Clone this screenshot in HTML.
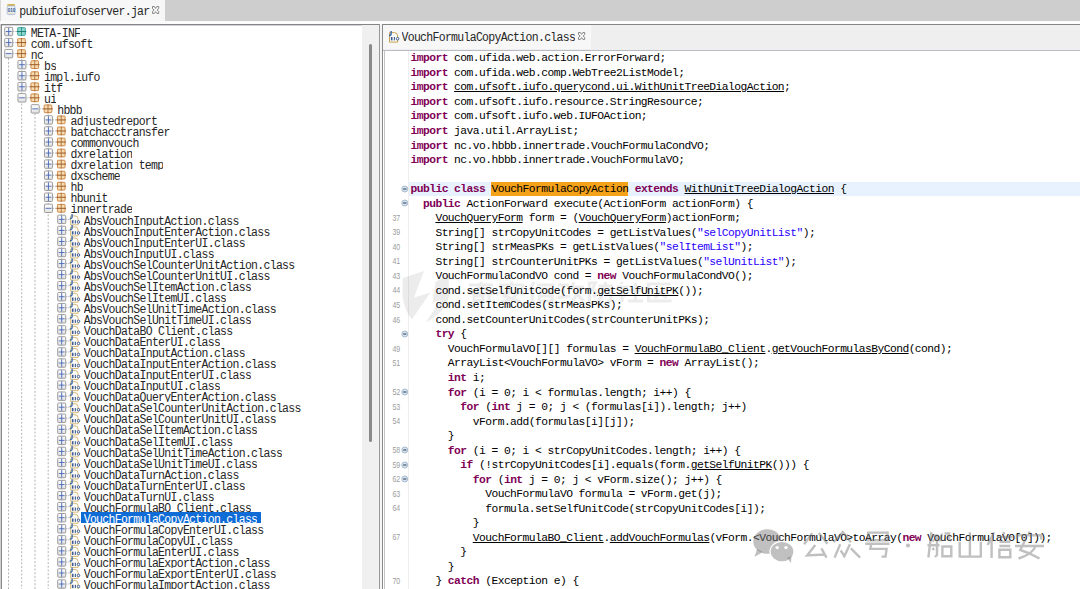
<!DOCTYPE html><html><head><meta charset="utf-8"><style>
*{margin:0;padding:0;box-sizing:border-box}
html,body{width:1080px;height:589px;overflow:hidden;background:#cecece;position:relative}
.a{position:absolute}
.tt{position:absolute;font-family:"Liberation Mono",monospace;font-size:11.5px;letter-spacing:-0.7px;color:#262626;white-space:pre;line-height:14.2px;height:11.05px;overflow:hidden}
.ts{display:block;transform:scaleY(1.05);transform-origin:0 10.15px}
.cl{position:absolute;left:410.5px;font-family:"Liberation Mono",monospace;font-size:11.3px;letter-spacing:-0.553px;color:#000;white-space:pre;line-height:14.53px;height:14.53px}
.k{color:#7f0055;font-weight:bold}
.s{color:#2a00ff}
.u{text-decoration:underline;text-underline-offset:1px}
.ln{position:absolute;left:380px;width:20.2px;text-align:right;font-family:"Liberation Sans",sans-serif;font-size:9px;color:#9c9c9c;line-height:14.53px;height:14.53px;transform:scaleX(0.78);transform-origin:100% 50%}
</style></head><body><div class="a" style="left:0;top:0;width:165px;height:22px;background:#f7f7f7"></div>
<div class="a" style="left:0;top:0;width:1px;height:23px;background:#d8d8d8"></div>
<div class="a" style="left:0;top:21px;width:1080px;height:3px;background:#fcfcfc"></div>
<div class="a" style="left:1px;top:24px;width:379px;height:565px;background:#fff;border-top:1px solid #858585;border-left:1px solid #8a8a8a;border-right:1px solid #9a9a9a"></div>
<div class="a" style="left:2px;top:25px;width:377px;height:1px;background:#d0d3d8"></div>
<div class="a" style="left:380px;top:24px;width:2px;height:565px;background:#f4f4f4"></div>
<div class="a" style="left:362px;top:25px;width:17px;height:564px;background:#f0f0f0"></div>
<div class="a" style="left:368.5px;top:44px;width:3.5px;height:398px;background:#8a8a8a;border-radius:2px"></div>
<div class="a" style="left:382px;top:24px;width:698px;height:565px;background:#fff;border-top:1px solid #858585;border-left:1px solid #8a8a8a"></div>
<div class="a" style="left:383px;top:25px;width:697px;height:25px;background:#efefef"></div>
<div class="a" style="left:383px;top:25px;width:208px;height:23.5px;background:#f7f7f7"></div>
<div class="a" style="left:383px;top:50px;width:697px;height:1px;background:#b9bcc2"></div>
<div class="a" style="left:384px;top:51px;width:1px;height:538px;background:#c4c4c4"></div>
<div class="a" style="left:408px;top:51px;width:1px;height:538px;background:#eeeeee"></div>
<div class="tt" style="left:19.3px;top:5.1px;height:15px;"><span class="ts">pubiufoiufoserver.jar</span></div>
<div class="tt" style="left:401.5px;top:30.9px;height:15px;"><span class="ts">VouchFormulaCopyAction.class</span></div>
<svg class="a" style="left:151.5px;top:5.6px" width="9" height="9"><path d="M0.5 0.5 H2.4 L3.6 2.4 L4.8 0.5 H6.7 V2.6 L5.1 4 L6.7 5.4 V7.4 H4.8 L3.6 5.6 L2.4 7.4 H0.5 V5.4 L2.1 4 L0.5 2.6 Z" fill="none" stroke="#858585" stroke-width="1"/></svg>
<svg class="a" style="left:577.6px;top:31.8px" width="9" height="9"><path d="M0.5 0.5 H2.4 L3.6 2.4 L4.8 0.5 H6.7 V2.6 L5.1 4 L6.7 5.4 V7.4 H4.8 L3.6 5.6 L2.4 7.4 H0.5 V5.4 L2.1 4 L0.5 2.6 Z" fill="none" stroke="#858585" stroke-width="1"/></svg>
<svg class="a" style="left:6px;top:3px" width="11" height="13"><rect x="1.3" y="1.1" width="7.6" height="2" rx="0.6" fill="#d6b24e"/><rect x="1.2" y="3" width="7.8" height="8.6" rx="1.2" fill="#eef3fa" stroke="#a9bddb" stroke-width="0.9"/><text x="1.7" y="9" font-family="Liberation Sans" font-size="4.6" font-weight="bold" fill="#33558a">010</text><rect x="2" y="9.8" width="6" height="1" fill="#e6ddb0"/></svg>
<svg class="a" style="left:0;top:0" width="420" height="60"><path d="M389.5 32.6 h4.8 q3.3 0 3.3 3.3 v6.2 h-8.1 z" fill="#fbfbf8" stroke="#c9a24e" stroke-width="1"/><path d="M391.1 31.000000000000004 v3 q0 1.6 -2.1 1.6" fill="none" stroke="#3f6fb0" stroke-width="1.5"/><rect x="390.90000000000003" y="37.0" width="1.6" height="3.4" fill="#3d5a92"/><rect x="393.8" y="37.0" width="1.1" height="3.4" fill="#3d5a92"/><circle cx="397.6" cy="38.7" r="1.3" fill="#fff" stroke="#3d5a92" stroke-width="1"/></svg>
<div class="a" style="left:2px;top:25px;width:360px;height:564px;overflow:hidden"><div class="a" style="left:-2px;top:-25px"><svg class="a" style="left:0;top:0" width="362" height="589"><defs><linearGradient id="bg" x1="0" y1="0" x2="0" y2="1"><stop offset="0" stop-color="#ffffff"/><stop offset="1" stop-color="#e2e2e2"/></linearGradient></defs><line x1="8.5" y1="58.1" x2="8.5" y2="589" stroke="#b4b4b4" stroke-width="1" stroke-dasharray="2,1.7"/><line x1="21.7" y1="59.150000000000006" x2="21.7" y2="589" stroke="#b4b4b4" stroke-width="1" stroke-dasharray="2,1.7"/><line x1="35.0" y1="113.35000000000001" x2="35.0" y2="589" stroke="#b4b4b4" stroke-width="1" stroke-dasharray="2,1.7"/><line x1="48.2" y1="114.4" x2="48.2" y2="589" stroke="#b4b4b4" stroke-width="1" stroke-dasharray="2,1.7"/><line x1="61.4" y1="213.85000000000002" x2="61.4" y2="589" stroke="#b4b4b4" stroke-width="1" stroke-dasharray="2,1.7"/><line x1="13.2" y1="31.525" x2="18.2" y2="31.525" stroke="#a0a0a0" stroke-width="1" stroke-dasharray="1,1.2"/><rect x="4.7" y="27.325" width="8" height="8.4" fill="url(#bg)" stroke="#9c9c9c" stroke-width="1" rx="0.8"/><line x1="5.800000000000001" y1="31.525" x2="11.600000000000001" y2="31.525" stroke="#4565b5" stroke-width="0.9"/><line x1="8.7" y1="27.825" x2="8.7" y2="35.225" stroke="#4565b5" stroke-width="0.9"/><rect x="17.7" y="27.625" width="7.6" height="7.7" rx="0.6" fill="#8fd8cf" stroke="#3fa7a0" stroke-width="1"/><line x1="21.5" y1="26.924999999999997" x2="21.5" y2="36.025" stroke="#1f7d78" stroke-width="0.9" stroke-opacity="0.8"/><line x1="16.6" y1="31.525" x2="26.3" y2="31.525" stroke="#1f7d78" stroke-width="1"/><line x1="13.2" y1="42.574999999999996" x2="18.2" y2="42.574999999999996" stroke="#a0a0a0" stroke-width="1" stroke-dasharray="1,1.2"/><rect x="4.7" y="38.37499999999999" width="8" height="8.4" fill="url(#bg)" stroke="#9c9c9c" stroke-width="1" rx="0.8"/><line x1="5.800000000000001" y1="42.574999999999996" x2="11.600000000000001" y2="42.574999999999996" stroke="#4565b5" stroke-width="0.9"/><line x1="8.7" y1="38.87499999999999" x2="8.7" y2="46.275" stroke="#4565b5" stroke-width="0.9"/><rect x="17.7" y="38.675" width="7.6" height="7.7" rx="0.6" fill="#f6dcae" stroke="#cf8a4b" stroke-width="1"/><line x1="21.5" y1="37.974999999999994" x2="21.5" y2="47.074999999999996" stroke="#9a5a2a" stroke-width="0.9" stroke-opacity="0.8"/><line x1="16.6" y1="42.574999999999996" x2="26.3" y2="42.574999999999996" stroke="#9a5a2a" stroke-width="1"/><line x1="13.2" y1="53.625" x2="18.2" y2="53.625" stroke="#a0a0a0" stroke-width="1" stroke-dasharray="1,1.2"/><rect x="4.7" y="49.425" width="8" height="8.4" fill="url(#bg)" stroke="#9c9c9c" stroke-width="1" rx="0.8"/><line x1="5.800000000000001" y1="53.625" x2="11.600000000000001" y2="53.625" stroke="#4565b5" stroke-width="0.9"/><rect x="17.7" y="49.725" width="7.6" height="7.7" rx="0.6" fill="#f6dcae" stroke="#cf8a4b" stroke-width="1"/><line x1="21.5" y1="49.025" x2="21.5" y2="58.125" stroke="#9a5a2a" stroke-width="0.9" stroke-opacity="0.8"/><line x1="16.6" y1="53.625" x2="26.3" y2="53.625" stroke="#9a5a2a" stroke-width="1"/><line x1="26.45" y1="64.67500000000001" x2="31.45" y2="64.67500000000001" stroke="#a0a0a0" stroke-width="1" stroke-dasharray="1,1.2"/><rect x="17.95" y="60.47500000000001" width="8" height="8.4" fill="url(#bg)" stroke="#9c9c9c" stroke-width="1" rx="0.8"/><line x1="19.05" y1="64.67500000000001" x2="24.85" y2="64.67500000000001" stroke="#4565b5" stroke-width="0.9"/><line x1="21.95" y1="60.97500000000001" x2="21.95" y2="68.37500000000001" stroke="#4565b5" stroke-width="0.9"/><rect x="30.949999999999996" y="60.77500000000001" width="7.6" height="7.7" rx="0.6" fill="#f6dcae" stroke="#cf8a4b" stroke-width="1"/><line x1="34.75" y1="60.07500000000001" x2="34.75" y2="69.17500000000001" stroke="#9a5a2a" stroke-width="0.9" stroke-opacity="0.8"/><line x1="29.849999999999998" y1="64.67500000000001" x2="39.55" y2="64.67500000000001" stroke="#9a5a2a" stroke-width="1"/><line x1="26.45" y1="75.72500000000001" x2="31.45" y2="75.72500000000001" stroke="#a0a0a0" stroke-width="1" stroke-dasharray="1,1.2"/><rect x="17.95" y="71.525" width="8" height="8.4" fill="url(#bg)" stroke="#9c9c9c" stroke-width="1" rx="0.8"/><line x1="19.05" y1="75.72500000000001" x2="24.85" y2="75.72500000000001" stroke="#4565b5" stroke-width="0.9"/><line x1="21.95" y1="72.025" x2="21.95" y2="79.42500000000001" stroke="#4565b5" stroke-width="0.9"/><rect x="30.949999999999996" y="71.825" width="7.6" height="7.7" rx="0.6" fill="#f6dcae" stroke="#cf8a4b" stroke-width="1"/><line x1="34.75" y1="71.12500000000001" x2="34.75" y2="80.22500000000001" stroke="#9a5a2a" stroke-width="0.9" stroke-opacity="0.8"/><line x1="29.849999999999998" y1="75.72500000000001" x2="39.55" y2="75.72500000000001" stroke="#9a5a2a" stroke-width="1"/><line x1="26.45" y1="86.775" x2="31.45" y2="86.775" stroke="#a0a0a0" stroke-width="1" stroke-dasharray="1,1.2"/><rect x="17.95" y="82.575" width="8" height="8.4" fill="url(#bg)" stroke="#9c9c9c" stroke-width="1" rx="0.8"/><line x1="19.05" y1="86.775" x2="24.85" y2="86.775" stroke="#4565b5" stroke-width="0.9"/><line x1="21.95" y1="83.075" x2="21.95" y2="90.47500000000001" stroke="#4565b5" stroke-width="0.9"/><rect x="30.949999999999996" y="82.875" width="7.6" height="7.7" rx="0.6" fill="#f6dcae" stroke="#cf8a4b" stroke-width="1"/><line x1="34.75" y1="82.17500000000001" x2="34.75" y2="91.275" stroke="#9a5a2a" stroke-width="0.9" stroke-opacity="0.8"/><line x1="29.849999999999998" y1="86.775" x2="39.55" y2="86.775" stroke="#9a5a2a" stroke-width="1"/><line x1="26.45" y1="97.82500000000002" x2="31.45" y2="97.82500000000002" stroke="#a0a0a0" stroke-width="1" stroke-dasharray="1,1.2"/><rect x="17.95" y="93.62500000000001" width="8" height="8.4" fill="url(#bg)" stroke="#9c9c9c" stroke-width="1" rx="0.8"/><line x1="19.05" y1="97.82500000000002" x2="24.85" y2="97.82500000000002" stroke="#4565b5" stroke-width="0.9"/><rect x="30.949999999999996" y="93.92500000000001" width="7.6" height="7.7" rx="0.6" fill="#f6dcae" stroke="#cf8a4b" stroke-width="1"/><line x1="34.75" y1="93.22500000000002" x2="34.75" y2="102.32500000000002" stroke="#9a5a2a" stroke-width="0.9" stroke-opacity="0.8"/><line x1="29.849999999999998" y1="97.82500000000002" x2="39.55" y2="97.82500000000002" stroke="#9a5a2a" stroke-width="1"/><line x1="39.7" y1="108.87500000000001" x2="44.7" y2="108.87500000000001" stroke="#a0a0a0" stroke-width="1" stroke-dasharray="1,1.2"/><rect x="31.2" y="104.67500000000001" width="8" height="8.4" fill="url(#bg)" stroke="#9c9c9c" stroke-width="1" rx="0.8"/><line x1="32.3" y1="108.87500000000001" x2="38.1" y2="108.87500000000001" stroke="#4565b5" stroke-width="0.9"/><rect x="44.199999999999996" y="104.97500000000001" width="7.6" height="7.7" rx="0.6" fill="#f6dcae" stroke="#cf8a4b" stroke-width="1"/><line x1="48.0" y1="104.27500000000002" x2="48.0" y2="113.37500000000001" stroke="#9a5a2a" stroke-width="0.9" stroke-opacity="0.8"/><line x1="43.099999999999994" y1="108.87500000000001" x2="52.8" y2="108.87500000000001" stroke="#9a5a2a" stroke-width="1"/><line x1="52.95" y1="119.92500000000001" x2="57.95" y2="119.92500000000001" stroke="#a0a0a0" stroke-width="1" stroke-dasharray="1,1.2"/><rect x="44.45" y="115.72500000000001" width="8" height="8.4" fill="url(#bg)" stroke="#9c9c9c" stroke-width="1" rx="0.8"/><line x1="45.550000000000004" y1="119.92500000000001" x2="51.35" y2="119.92500000000001" stroke="#4565b5" stroke-width="0.9"/><line x1="48.45" y1="116.22500000000001" x2="48.45" y2="123.62500000000001" stroke="#4565b5" stroke-width="0.9"/><rect x="57.45" y="116.025" width="7.6" height="7.7" rx="0.6" fill="#f6dcae" stroke="#cf8a4b" stroke-width="1"/><line x1="61.25000000000001" y1="115.32500000000002" x2="61.25000000000001" y2="124.42500000000001" stroke="#9a5a2a" stroke-width="0.9" stroke-opacity="0.8"/><line x1="56.35" y1="119.92500000000001" x2="66.05000000000001" y2="119.92500000000001" stroke="#9a5a2a" stroke-width="1"/><line x1="52.95" y1="130.975" x2="57.95" y2="130.975" stroke="#a0a0a0" stroke-width="1" stroke-dasharray="1,1.2"/><rect x="44.45" y="126.77499999999999" width="8" height="8.4" fill="url(#bg)" stroke="#9c9c9c" stroke-width="1" rx="0.8"/><line x1="45.550000000000004" y1="130.975" x2="51.35" y2="130.975" stroke="#4565b5" stroke-width="0.9"/><line x1="48.45" y1="127.27499999999999" x2="48.45" y2="134.67499999999998" stroke="#4565b5" stroke-width="0.9"/><rect x="57.45" y="127.07499999999999" width="7.6" height="7.7" rx="0.6" fill="#f6dcae" stroke="#cf8a4b" stroke-width="1"/><line x1="61.25000000000001" y1="126.375" x2="61.25000000000001" y2="135.475" stroke="#9a5a2a" stroke-width="0.9" stroke-opacity="0.8"/><line x1="56.35" y1="130.975" x2="66.05000000000001" y2="130.975" stroke="#9a5a2a" stroke-width="1"/><line x1="52.95" y1="142.025" x2="57.95" y2="142.025" stroke="#a0a0a0" stroke-width="1" stroke-dasharray="1,1.2"/><rect x="44.45" y="137.82500000000002" width="8" height="8.4" fill="url(#bg)" stroke="#9c9c9c" stroke-width="1" rx="0.8"/><line x1="45.550000000000004" y1="142.025" x2="51.35" y2="142.025" stroke="#4565b5" stroke-width="0.9"/><line x1="48.45" y1="138.32500000000002" x2="48.45" y2="145.725" stroke="#4565b5" stroke-width="0.9"/><rect x="57.45" y="138.125" width="7.6" height="7.7" rx="0.6" fill="#f6dcae" stroke="#cf8a4b" stroke-width="1"/><line x1="61.25000000000001" y1="137.425" x2="61.25000000000001" y2="146.525" stroke="#9a5a2a" stroke-width="0.9" stroke-opacity="0.8"/><line x1="56.35" y1="142.025" x2="66.05000000000001" y2="142.025" stroke="#9a5a2a" stroke-width="1"/><line x1="52.95" y1="153.07500000000002" x2="57.95" y2="153.07500000000002" stroke="#a0a0a0" stroke-width="1" stroke-dasharray="1,1.2"/><rect x="44.45" y="148.87500000000003" width="8" height="8.4" fill="url(#bg)" stroke="#9c9c9c" stroke-width="1" rx="0.8"/><line x1="45.550000000000004" y1="153.07500000000002" x2="51.35" y2="153.07500000000002" stroke="#4565b5" stroke-width="0.9"/><line x1="48.45" y1="149.37500000000003" x2="48.45" y2="156.775" stroke="#4565b5" stroke-width="0.9"/><rect x="57.45" y="149.175" width="7.6" height="7.7" rx="0.6" fill="#f6dcae" stroke="#cf8a4b" stroke-width="1"/><line x1="61.25000000000001" y1="148.47500000000002" x2="61.25000000000001" y2="157.57500000000002" stroke="#9a5a2a" stroke-width="0.9" stroke-opacity="0.8"/><line x1="56.35" y1="153.07500000000002" x2="66.05000000000001" y2="153.07500000000002" stroke="#9a5a2a" stroke-width="1"/><line x1="52.95" y1="164.12500000000003" x2="57.95" y2="164.12500000000003" stroke="#a0a0a0" stroke-width="1" stroke-dasharray="1,1.2"/><rect x="44.45" y="159.92500000000004" width="8" height="8.4" fill="url(#bg)" stroke="#9c9c9c" stroke-width="1" rx="0.8"/><line x1="45.550000000000004" y1="164.12500000000003" x2="51.35" y2="164.12500000000003" stroke="#4565b5" stroke-width="0.9"/><line x1="48.45" y1="160.42500000000004" x2="48.45" y2="167.82500000000002" stroke="#4565b5" stroke-width="0.9"/><rect x="57.45" y="160.22500000000002" width="7.6" height="7.7" rx="0.6" fill="#f6dcae" stroke="#cf8a4b" stroke-width="1"/><line x1="61.25000000000001" y1="159.52500000000003" x2="61.25000000000001" y2="168.62500000000003" stroke="#9a5a2a" stroke-width="0.9" stroke-opacity="0.8"/><line x1="56.35" y1="164.12500000000003" x2="66.05000000000001" y2="164.12500000000003" stroke="#9a5a2a" stroke-width="1"/><line x1="52.95" y1="175.175" x2="57.95" y2="175.175" stroke="#a0a0a0" stroke-width="1" stroke-dasharray="1,1.2"/><rect x="44.45" y="170.97500000000002" width="8" height="8.4" fill="url(#bg)" stroke="#9c9c9c" stroke-width="1" rx="0.8"/><line x1="45.550000000000004" y1="175.175" x2="51.35" y2="175.175" stroke="#4565b5" stroke-width="0.9"/><line x1="48.45" y1="171.47500000000002" x2="48.45" y2="178.875" stroke="#4565b5" stroke-width="0.9"/><rect x="57.45" y="171.275" width="7.6" height="7.7" rx="0.6" fill="#f6dcae" stroke="#cf8a4b" stroke-width="1"/><line x1="61.25000000000001" y1="170.57500000000002" x2="61.25000000000001" y2="179.675" stroke="#9a5a2a" stroke-width="0.9" stroke-opacity="0.8"/><line x1="56.35" y1="175.175" x2="66.05000000000001" y2="175.175" stroke="#9a5a2a" stroke-width="1"/><line x1="52.95" y1="186.22500000000002" x2="57.95" y2="186.22500000000002" stroke="#a0a0a0" stroke-width="1" stroke-dasharray="1,1.2"/><rect x="44.45" y="182.02500000000003" width="8" height="8.4" fill="url(#bg)" stroke="#9c9c9c" stroke-width="1" rx="0.8"/><line x1="45.550000000000004" y1="186.22500000000002" x2="51.35" y2="186.22500000000002" stroke="#4565b5" stroke-width="0.9"/><line x1="48.45" y1="182.52500000000003" x2="48.45" y2="189.925" stroke="#4565b5" stroke-width="0.9"/><rect x="57.45" y="182.32500000000002" width="7.6" height="7.7" rx="0.6" fill="#f6dcae" stroke="#cf8a4b" stroke-width="1"/><line x1="61.25000000000001" y1="181.62500000000003" x2="61.25000000000001" y2="190.72500000000002" stroke="#9a5a2a" stroke-width="0.9" stroke-opacity="0.8"/><line x1="56.35" y1="186.22500000000002" x2="66.05000000000001" y2="186.22500000000002" stroke="#9a5a2a" stroke-width="1"/><line x1="52.95" y1="197.275" x2="57.95" y2="197.275" stroke="#a0a0a0" stroke-width="1" stroke-dasharray="1,1.2"/><rect x="44.45" y="193.07500000000002" width="8" height="8.4" fill="url(#bg)" stroke="#9c9c9c" stroke-width="1" rx="0.8"/><line x1="45.550000000000004" y1="197.275" x2="51.35" y2="197.275" stroke="#4565b5" stroke-width="0.9"/><line x1="48.45" y1="193.57500000000002" x2="48.45" y2="200.975" stroke="#4565b5" stroke-width="0.9"/><rect x="57.45" y="193.375" width="7.6" height="7.7" rx="0.6" fill="#f6dcae" stroke="#cf8a4b" stroke-width="1"/><line x1="61.25000000000001" y1="192.675" x2="61.25000000000001" y2="201.775" stroke="#9a5a2a" stroke-width="0.9" stroke-opacity="0.8"/><line x1="56.35" y1="197.275" x2="66.05000000000001" y2="197.275" stroke="#9a5a2a" stroke-width="1"/><line x1="52.95" y1="208.32500000000002" x2="57.95" y2="208.32500000000002" stroke="#a0a0a0" stroke-width="1" stroke-dasharray="1,1.2"/><rect x="44.45" y="204.12500000000003" width="8" height="8.4" fill="url(#bg)" stroke="#9c9c9c" stroke-width="1" rx="0.8"/><line x1="45.550000000000004" y1="208.32500000000002" x2="51.35" y2="208.32500000000002" stroke="#4565b5" stroke-width="0.9"/><rect x="57.45" y="204.425" width="7.6" height="7.7" rx="0.6" fill="#f6dcae" stroke="#cf8a4b" stroke-width="1"/><line x1="61.25000000000001" y1="203.72500000000002" x2="61.25000000000001" y2="212.82500000000002" stroke="#9a5a2a" stroke-width="0.9" stroke-opacity="0.8"/><line x1="56.35" y1="208.32500000000002" x2="66.05000000000001" y2="208.32500000000002" stroke="#9a5a2a" stroke-width="1"/><line x1="66.2" y1="219.37500000000003" x2="71.2" y2="219.37500000000003" stroke="#a0a0a0" stroke-width="1" stroke-dasharray="1,1.2"/><rect x="57.7" y="215.17500000000004" width="8" height="8.4" fill="url(#bg)" stroke="#9c9c9c" stroke-width="1" rx="0.8"/><line x1="58.800000000000004" y1="219.37500000000003" x2="64.60000000000001" y2="219.37500000000003" stroke="#4565b5" stroke-width="0.9"/><line x1="61.7" y1="215.67500000000004" x2="61.7" y2="223.07500000000002" stroke="#4565b5" stroke-width="0.9"/><path d="M70.7 215.87500000000003 h4.3 q3.1 0 3.1 3.1 v5.9 h-7.4 z" fill="#fbfbf8" stroke="#cfae62" stroke-width="0.85"/><path d="M72.1 213.97500000000002 V216.97500000000002 Q72.1 218.67500000000004 69.8 218.47500000000002" fill="none" stroke="#3f6fb0" stroke-width="1.4"/><rect x="71.89999999999999" y="220.17500000000004" width="1.6" height="3.3" fill="#3d5a92"/><rect x="74.8" y="220.17500000000004" width="1.1" height="3.3" fill="#3d5a92"/><circle cx="78.5" cy="221.87500000000003" r="1.25" fill="#fff" stroke="#3d5a92" stroke-width="1"/><line x1="66.2" y1="230.425" x2="71.2" y2="230.425" stroke="#a0a0a0" stroke-width="1" stroke-dasharray="1,1.2"/><rect x="57.7" y="226.22500000000002" width="8" height="8.4" fill="url(#bg)" stroke="#9c9c9c" stroke-width="1" rx="0.8"/><line x1="58.800000000000004" y1="230.425" x2="64.60000000000001" y2="230.425" stroke="#4565b5" stroke-width="0.9"/><line x1="61.7" y1="226.72500000000002" x2="61.7" y2="234.125" stroke="#4565b5" stroke-width="0.9"/><path d="M70.7 226.925 h4.3 q3.1 0 3.1 3.1 v5.9 h-7.4 z" fill="#fbfbf8" stroke="#cfae62" stroke-width="0.85"/><path d="M72.1 225.025 V228.025 Q72.1 229.72500000000002 69.8 229.525" fill="none" stroke="#3f6fb0" stroke-width="1.4"/><rect x="71.89999999999999" y="231.22500000000002" width="1.6" height="3.3" fill="#3d5a92"/><rect x="74.8" y="231.22500000000002" width="1.1" height="3.3" fill="#3d5a92"/><circle cx="78.5" cy="232.925" r="1.25" fill="#fff" stroke="#3d5a92" stroke-width="1"/><line x1="66.2" y1="241.47500000000002" x2="71.2" y2="241.47500000000002" stroke="#a0a0a0" stroke-width="1" stroke-dasharray="1,1.2"/><rect x="57.7" y="237.27500000000003" width="8" height="8.4" fill="url(#bg)" stroke="#9c9c9c" stroke-width="1" rx="0.8"/><line x1="58.800000000000004" y1="241.47500000000002" x2="64.60000000000001" y2="241.47500000000002" stroke="#4565b5" stroke-width="0.9"/><line x1="61.7" y1="237.77500000000003" x2="61.7" y2="245.175" stroke="#4565b5" stroke-width="0.9"/><path d="M70.7 237.97500000000002 h4.3 q3.1 0 3.1 3.1 v5.9 h-7.4 z" fill="#fbfbf8" stroke="#cfae62" stroke-width="0.85"/><path d="M72.1 236.07500000000002 V239.07500000000002 Q72.1 240.77500000000003 69.8 240.57500000000002" fill="none" stroke="#3f6fb0" stroke-width="1.4"/><rect x="71.89999999999999" y="242.27500000000003" width="1.6" height="3.3" fill="#3d5a92"/><rect x="74.8" y="242.27500000000003" width="1.1" height="3.3" fill="#3d5a92"/><circle cx="78.5" cy="243.97500000000002" r="1.25" fill="#fff" stroke="#3d5a92" stroke-width="1"/><line x1="66.2" y1="252.525" x2="71.2" y2="252.525" stroke="#a0a0a0" stroke-width="1" stroke-dasharray="1,1.2"/><rect x="57.7" y="248.32500000000002" width="8" height="8.4" fill="url(#bg)" stroke="#9c9c9c" stroke-width="1" rx="0.8"/><line x1="58.800000000000004" y1="252.525" x2="64.60000000000001" y2="252.525" stroke="#4565b5" stroke-width="0.9"/><line x1="61.7" y1="248.82500000000002" x2="61.7" y2="256.225" stroke="#4565b5" stroke-width="0.9"/><path d="M70.7 249.025 h4.3 q3.1 0 3.1 3.1 v5.9 h-7.4 z" fill="#fbfbf8" stroke="#cfae62" stroke-width="0.85"/><path d="M72.1 247.125 V250.125 Q72.1 251.82500000000002 69.8 251.625" fill="none" stroke="#3f6fb0" stroke-width="1.4"/><rect x="71.89999999999999" y="253.32500000000002" width="1.6" height="3.3" fill="#3d5a92"/><rect x="74.8" y="253.32500000000002" width="1.1" height="3.3" fill="#3d5a92"/><circle cx="78.5" cy="255.025" r="1.25" fill="#fff" stroke="#3d5a92" stroke-width="1"/><line x1="66.2" y1="263.575" x2="71.2" y2="263.575" stroke="#a0a0a0" stroke-width="1" stroke-dasharray="1,1.2"/><rect x="57.7" y="259.375" width="8" height="8.4" fill="url(#bg)" stroke="#9c9c9c" stroke-width="1" rx="0.8"/><line x1="58.800000000000004" y1="263.575" x2="64.60000000000001" y2="263.575" stroke="#4565b5" stroke-width="0.9"/><line x1="61.7" y1="259.875" x2="61.7" y2="267.275" stroke="#4565b5" stroke-width="0.9"/><path d="M70.7 260.075 h4.3 q3.1 0 3.1 3.1 v5.9 h-7.4 z" fill="#fbfbf8" stroke="#cfae62" stroke-width="0.85"/><path d="M72.1 258.175 V261.175 Q72.1 262.875 69.8 262.675" fill="none" stroke="#3f6fb0" stroke-width="1.4"/><rect x="71.89999999999999" y="264.375" width="1.6" height="3.3" fill="#3d5a92"/><rect x="74.8" y="264.375" width="1.1" height="3.3" fill="#3d5a92"/><circle cx="78.5" cy="266.075" r="1.25" fill="#fff" stroke="#3d5a92" stroke-width="1"/><line x1="66.2" y1="274.625" x2="71.2" y2="274.625" stroke="#a0a0a0" stroke-width="1" stroke-dasharray="1,1.2"/><rect x="57.7" y="270.425" width="8" height="8.4" fill="url(#bg)" stroke="#9c9c9c" stroke-width="1" rx="0.8"/><line x1="58.800000000000004" y1="274.625" x2="64.60000000000001" y2="274.625" stroke="#4565b5" stroke-width="0.9"/><line x1="61.7" y1="270.925" x2="61.7" y2="278.325" stroke="#4565b5" stroke-width="0.9"/><path d="M70.7 271.125 h4.3 q3.1 0 3.1 3.1 v5.9 h-7.4 z" fill="#fbfbf8" stroke="#cfae62" stroke-width="0.85"/><path d="M72.1 269.225 V272.225 Q72.1 273.925 69.8 273.725" fill="none" stroke="#3f6fb0" stroke-width="1.4"/><rect x="71.89999999999999" y="275.425" width="1.6" height="3.3" fill="#3d5a92"/><rect x="74.8" y="275.425" width="1.1" height="3.3" fill="#3d5a92"/><circle cx="78.5" cy="277.125" r="1.25" fill="#fff" stroke="#3d5a92" stroke-width="1"/><line x1="66.2" y1="285.67499999999995" x2="71.2" y2="285.67499999999995" stroke="#a0a0a0" stroke-width="1" stroke-dasharray="1,1.2"/><rect x="57.7" y="281.47499999999997" width="8" height="8.4" fill="url(#bg)" stroke="#9c9c9c" stroke-width="1" rx="0.8"/><line x1="58.800000000000004" y1="285.67499999999995" x2="64.60000000000001" y2="285.67499999999995" stroke="#4565b5" stroke-width="0.9"/><line x1="61.7" y1="281.97499999999997" x2="61.7" y2="289.37499999999994" stroke="#4565b5" stroke-width="0.9"/><path d="M70.7 282.17499999999995 h4.3 q3.1 0 3.1 3.1 v5.9 h-7.4 z" fill="#fbfbf8" stroke="#cfae62" stroke-width="0.85"/><path d="M72.1 280.275 V283.275 Q72.1 284.97499999999997 69.8 284.775" fill="none" stroke="#3f6fb0" stroke-width="1.4"/><rect x="71.89999999999999" y="286.47499999999997" width="1.6" height="3.3" fill="#3d5a92"/><rect x="74.8" y="286.47499999999997" width="1.1" height="3.3" fill="#3d5a92"/><circle cx="78.5" cy="288.17499999999995" r="1.25" fill="#fff" stroke="#3d5a92" stroke-width="1"/><line x1="66.2" y1="296.725" x2="71.2" y2="296.725" stroke="#a0a0a0" stroke-width="1" stroke-dasharray="1,1.2"/><rect x="57.7" y="292.52500000000003" width="8" height="8.4" fill="url(#bg)" stroke="#9c9c9c" stroke-width="1" rx="0.8"/><line x1="58.800000000000004" y1="296.725" x2="64.60000000000001" y2="296.725" stroke="#4565b5" stroke-width="0.9"/><line x1="61.7" y1="293.02500000000003" x2="61.7" y2="300.425" stroke="#4565b5" stroke-width="0.9"/><path d="M70.7 293.225 h4.3 q3.1 0 3.1 3.1 v5.9 h-7.4 z" fill="#fbfbf8" stroke="#cfae62" stroke-width="0.85"/><path d="M72.1 291.32500000000005 V294.32500000000005 Q72.1 296.02500000000003 69.8 295.82500000000005" fill="none" stroke="#3f6fb0" stroke-width="1.4"/><rect x="71.89999999999999" y="297.52500000000003" width="1.6" height="3.3" fill="#3d5a92"/><rect x="74.8" y="297.52500000000003" width="1.1" height="3.3" fill="#3d5a92"/><circle cx="78.5" cy="299.225" r="1.25" fill="#fff" stroke="#3d5a92" stroke-width="1"/><line x1="66.2" y1="307.775" x2="71.2" y2="307.775" stroke="#a0a0a0" stroke-width="1" stroke-dasharray="1,1.2"/><rect x="57.7" y="303.575" width="8" height="8.4" fill="url(#bg)" stroke="#9c9c9c" stroke-width="1" rx="0.8"/><line x1="58.800000000000004" y1="307.775" x2="64.60000000000001" y2="307.775" stroke="#4565b5" stroke-width="0.9"/><line x1="61.7" y1="304.075" x2="61.7" y2="311.47499999999997" stroke="#4565b5" stroke-width="0.9"/><path d="M70.7 304.275 h4.3 q3.1 0 3.1 3.1 v5.9 h-7.4 z" fill="#fbfbf8" stroke="#cfae62" stroke-width="0.85"/><path d="M72.1 302.375 V305.375 Q72.1 307.075 69.8 306.875" fill="none" stroke="#3f6fb0" stroke-width="1.4"/><rect x="71.89999999999999" y="308.575" width="1.6" height="3.3" fill="#3d5a92"/><rect x="74.8" y="308.575" width="1.1" height="3.3" fill="#3d5a92"/><circle cx="78.5" cy="310.275" r="1.25" fill="#fff" stroke="#3d5a92" stroke-width="1"/><line x1="66.2" y1="318.825" x2="71.2" y2="318.825" stroke="#a0a0a0" stroke-width="1" stroke-dasharray="1,1.2"/><rect x="57.7" y="314.625" width="8" height="8.4" fill="url(#bg)" stroke="#9c9c9c" stroke-width="1" rx="0.8"/><line x1="58.800000000000004" y1="318.825" x2="64.60000000000001" y2="318.825" stroke="#4565b5" stroke-width="0.9"/><line x1="61.7" y1="315.125" x2="61.7" y2="322.525" stroke="#4565b5" stroke-width="0.9"/><path d="M70.7 315.325 h4.3 q3.1 0 3.1 3.1 v5.9 h-7.4 z" fill="#fbfbf8" stroke="#cfae62" stroke-width="0.85"/><path d="M72.1 313.425 V316.425 Q72.1 318.125 69.8 317.925" fill="none" stroke="#3f6fb0" stroke-width="1.4"/><rect x="71.89999999999999" y="319.625" width="1.6" height="3.3" fill="#3d5a92"/><rect x="74.8" y="319.625" width="1.1" height="3.3" fill="#3d5a92"/><circle cx="78.5" cy="321.325" r="1.25" fill="#fff" stroke="#3d5a92" stroke-width="1"/><line x1="66.2" y1="329.875" x2="71.2" y2="329.875" stroke="#a0a0a0" stroke-width="1" stroke-dasharray="1,1.2"/><rect x="57.7" y="325.675" width="8" height="8.4" fill="url(#bg)" stroke="#9c9c9c" stroke-width="1" rx="0.8"/><line x1="58.800000000000004" y1="329.875" x2="64.60000000000001" y2="329.875" stroke="#4565b5" stroke-width="0.9"/><line x1="61.7" y1="326.175" x2="61.7" y2="333.575" stroke="#4565b5" stroke-width="0.9"/><path d="M70.7 326.375 h4.3 q3.1 0 3.1 3.1 v5.9 h-7.4 z" fill="#fbfbf8" stroke="#cfae62" stroke-width="0.85"/><path d="M72.1 324.475 V327.475 Q72.1 329.175 69.8 328.975" fill="none" stroke="#3f6fb0" stroke-width="1.4"/><rect x="71.89999999999999" y="330.675" width="1.6" height="3.3" fill="#3d5a92"/><rect x="74.8" y="330.675" width="1.1" height="3.3" fill="#3d5a92"/><circle cx="78.5" cy="332.375" r="1.25" fill="#fff" stroke="#3d5a92" stroke-width="1"/><line x1="66.2" y1="340.925" x2="71.2" y2="340.925" stroke="#a0a0a0" stroke-width="1" stroke-dasharray="1,1.2"/><rect x="57.7" y="336.725" width="8" height="8.4" fill="url(#bg)" stroke="#9c9c9c" stroke-width="1" rx="0.8"/><line x1="58.800000000000004" y1="340.925" x2="64.60000000000001" y2="340.925" stroke="#4565b5" stroke-width="0.9"/><line x1="61.7" y1="337.225" x2="61.7" y2="344.625" stroke="#4565b5" stroke-width="0.9"/><path d="M70.7 337.425 h4.3 q3.1 0 3.1 3.1 v5.9 h-7.4 z" fill="#fbfbf8" stroke="#cfae62" stroke-width="0.85"/><path d="M72.1 335.52500000000003 V338.52500000000003 Q72.1 340.225 69.8 340.02500000000003" fill="none" stroke="#3f6fb0" stroke-width="1.4"/><rect x="71.89999999999999" y="341.725" width="1.6" height="3.3" fill="#3d5a92"/><rect x="74.8" y="341.725" width="1.1" height="3.3" fill="#3d5a92"/><circle cx="78.5" cy="343.425" r="1.25" fill="#fff" stroke="#3d5a92" stroke-width="1"/><line x1="66.2" y1="351.975" x2="71.2" y2="351.975" stroke="#a0a0a0" stroke-width="1" stroke-dasharray="1,1.2"/><rect x="57.7" y="347.77500000000003" width="8" height="8.4" fill="url(#bg)" stroke="#9c9c9c" stroke-width="1" rx="0.8"/><line x1="58.800000000000004" y1="351.975" x2="64.60000000000001" y2="351.975" stroke="#4565b5" stroke-width="0.9"/><line x1="61.7" y1="348.27500000000003" x2="61.7" y2="355.675" stroke="#4565b5" stroke-width="0.9"/><path d="M70.7 348.475 h4.3 q3.1 0 3.1 3.1 v5.9 h-7.4 z" fill="#fbfbf8" stroke="#cfae62" stroke-width="0.85"/><path d="M72.1 346.57500000000005 V349.57500000000005 Q72.1 351.27500000000003 69.8 351.07500000000005" fill="none" stroke="#3f6fb0" stroke-width="1.4"/><rect x="71.89999999999999" y="352.77500000000003" width="1.6" height="3.3" fill="#3d5a92"/><rect x="74.8" y="352.77500000000003" width="1.1" height="3.3" fill="#3d5a92"/><circle cx="78.5" cy="354.475" r="1.25" fill="#fff" stroke="#3d5a92" stroke-width="1"/><line x1="66.2" y1="363.025" x2="71.2" y2="363.025" stroke="#a0a0a0" stroke-width="1" stroke-dasharray="1,1.2"/><rect x="57.7" y="358.825" width="8" height="8.4" fill="url(#bg)" stroke="#9c9c9c" stroke-width="1" rx="0.8"/><line x1="58.800000000000004" y1="363.025" x2="64.60000000000001" y2="363.025" stroke="#4565b5" stroke-width="0.9"/><line x1="61.7" y1="359.325" x2="61.7" y2="366.72499999999997" stroke="#4565b5" stroke-width="0.9"/><path d="M70.7 359.525 h4.3 q3.1 0 3.1 3.1 v5.9 h-7.4 z" fill="#fbfbf8" stroke="#cfae62" stroke-width="0.85"/><path d="M72.1 357.625 V360.625 Q72.1 362.325 69.8 362.125" fill="none" stroke="#3f6fb0" stroke-width="1.4"/><rect x="71.89999999999999" y="363.825" width="1.6" height="3.3" fill="#3d5a92"/><rect x="74.8" y="363.825" width="1.1" height="3.3" fill="#3d5a92"/><circle cx="78.5" cy="365.525" r="1.25" fill="#fff" stroke="#3d5a92" stroke-width="1"/><line x1="66.2" y1="374.075" x2="71.2" y2="374.075" stroke="#a0a0a0" stroke-width="1" stroke-dasharray="1,1.2"/><rect x="57.7" y="369.875" width="8" height="8.4" fill="url(#bg)" stroke="#9c9c9c" stroke-width="1" rx="0.8"/><line x1="58.800000000000004" y1="374.075" x2="64.60000000000001" y2="374.075" stroke="#4565b5" stroke-width="0.9"/><line x1="61.7" y1="370.375" x2="61.7" y2="377.775" stroke="#4565b5" stroke-width="0.9"/><path d="M70.7 370.575 h4.3 q3.1 0 3.1 3.1 v5.9 h-7.4 z" fill="#fbfbf8" stroke="#cfae62" stroke-width="0.85"/><path d="M72.1 368.675 V371.675 Q72.1 373.375 69.8 373.175" fill="none" stroke="#3f6fb0" stroke-width="1.4"/><rect x="71.89999999999999" y="374.875" width="1.6" height="3.3" fill="#3d5a92"/><rect x="74.8" y="374.875" width="1.1" height="3.3" fill="#3d5a92"/><circle cx="78.5" cy="376.575" r="1.25" fill="#fff" stroke="#3d5a92" stroke-width="1"/><line x1="66.2" y1="385.125" x2="71.2" y2="385.125" stroke="#a0a0a0" stroke-width="1" stroke-dasharray="1,1.2"/><rect x="57.7" y="380.925" width="8" height="8.4" fill="url(#bg)" stroke="#9c9c9c" stroke-width="1" rx="0.8"/><line x1="58.800000000000004" y1="385.125" x2="64.60000000000001" y2="385.125" stroke="#4565b5" stroke-width="0.9"/><line x1="61.7" y1="381.425" x2="61.7" y2="388.825" stroke="#4565b5" stroke-width="0.9"/><path d="M70.7 381.625 h4.3 q3.1 0 3.1 3.1 v5.9 h-7.4 z" fill="#fbfbf8" stroke="#cfae62" stroke-width="0.85"/><path d="M72.1 379.725 V382.725 Q72.1 384.425 69.8 384.225" fill="none" stroke="#3f6fb0" stroke-width="1.4"/><rect x="71.89999999999999" y="385.925" width="1.6" height="3.3" fill="#3d5a92"/><rect x="74.8" y="385.925" width="1.1" height="3.3" fill="#3d5a92"/><circle cx="78.5" cy="387.625" r="1.25" fill="#fff" stroke="#3d5a92" stroke-width="1"/><line x1="66.2" y1="396.175" x2="71.2" y2="396.175" stroke="#a0a0a0" stroke-width="1" stroke-dasharray="1,1.2"/><rect x="57.7" y="391.975" width="8" height="8.4" fill="url(#bg)" stroke="#9c9c9c" stroke-width="1" rx="0.8"/><line x1="58.800000000000004" y1="396.175" x2="64.60000000000001" y2="396.175" stroke="#4565b5" stroke-width="0.9"/><line x1="61.7" y1="392.475" x2="61.7" y2="399.875" stroke="#4565b5" stroke-width="0.9"/><path d="M70.7 392.675 h4.3 q3.1 0 3.1 3.1 v5.9 h-7.4 z" fill="#fbfbf8" stroke="#cfae62" stroke-width="0.85"/><path d="M72.1 390.77500000000003 V393.77500000000003 Q72.1 395.475 69.8 395.27500000000003" fill="none" stroke="#3f6fb0" stroke-width="1.4"/><rect x="71.89999999999999" y="396.975" width="1.6" height="3.3" fill="#3d5a92"/><rect x="74.8" y="396.975" width="1.1" height="3.3" fill="#3d5a92"/><circle cx="78.5" cy="398.675" r="1.25" fill="#fff" stroke="#3d5a92" stroke-width="1"/><line x1="66.2" y1="407.225" x2="71.2" y2="407.225" stroke="#a0a0a0" stroke-width="1" stroke-dasharray="1,1.2"/><rect x="57.7" y="403.02500000000003" width="8" height="8.4" fill="url(#bg)" stroke="#9c9c9c" stroke-width="1" rx="0.8"/><line x1="58.800000000000004" y1="407.225" x2="64.60000000000001" y2="407.225" stroke="#4565b5" stroke-width="0.9"/><line x1="61.7" y1="403.52500000000003" x2="61.7" y2="410.925" stroke="#4565b5" stroke-width="0.9"/><path d="M70.7 403.725 h4.3 q3.1 0 3.1 3.1 v5.9 h-7.4 z" fill="#fbfbf8" stroke="#cfae62" stroke-width="0.85"/><path d="M72.1 401.82500000000005 V404.82500000000005 Q72.1 406.52500000000003 69.8 406.32500000000005" fill="none" stroke="#3f6fb0" stroke-width="1.4"/><rect x="71.89999999999999" y="408.02500000000003" width="1.6" height="3.3" fill="#3d5a92"/><rect x="74.8" y="408.02500000000003" width="1.1" height="3.3" fill="#3d5a92"/><circle cx="78.5" cy="409.725" r="1.25" fill="#fff" stroke="#3d5a92" stroke-width="1"/><line x1="66.2" y1="418.275" x2="71.2" y2="418.275" stroke="#a0a0a0" stroke-width="1" stroke-dasharray="1,1.2"/><rect x="57.7" y="414.075" width="8" height="8.4" fill="url(#bg)" stroke="#9c9c9c" stroke-width="1" rx="0.8"/><line x1="58.800000000000004" y1="418.275" x2="64.60000000000001" y2="418.275" stroke="#4565b5" stroke-width="0.9"/><line x1="61.7" y1="414.575" x2="61.7" y2="421.97499999999997" stroke="#4565b5" stroke-width="0.9"/><path d="M70.7 414.775 h4.3 q3.1 0 3.1 3.1 v5.9 h-7.4 z" fill="#fbfbf8" stroke="#cfae62" stroke-width="0.85"/><path d="M72.1 412.875 V415.875 Q72.1 417.575 69.8 417.375" fill="none" stroke="#3f6fb0" stroke-width="1.4"/><rect x="71.89999999999999" y="419.075" width="1.6" height="3.3" fill="#3d5a92"/><rect x="74.8" y="419.075" width="1.1" height="3.3" fill="#3d5a92"/><circle cx="78.5" cy="420.775" r="1.25" fill="#fff" stroke="#3d5a92" stroke-width="1"/><line x1="66.2" y1="429.325" x2="71.2" y2="429.325" stroke="#a0a0a0" stroke-width="1" stroke-dasharray="1,1.2"/><rect x="57.7" y="425.125" width="8" height="8.4" fill="url(#bg)" stroke="#9c9c9c" stroke-width="1" rx="0.8"/><line x1="58.800000000000004" y1="429.325" x2="64.60000000000001" y2="429.325" stroke="#4565b5" stroke-width="0.9"/><line x1="61.7" y1="425.625" x2="61.7" y2="433.025" stroke="#4565b5" stroke-width="0.9"/><path d="M70.7 425.825 h4.3 q3.1 0 3.1 3.1 v5.9 h-7.4 z" fill="#fbfbf8" stroke="#cfae62" stroke-width="0.85"/><path d="M72.1 423.925 V426.925 Q72.1 428.625 69.8 428.425" fill="none" stroke="#3f6fb0" stroke-width="1.4"/><rect x="71.89999999999999" y="430.125" width="1.6" height="3.3" fill="#3d5a92"/><rect x="74.8" y="430.125" width="1.1" height="3.3" fill="#3d5a92"/><circle cx="78.5" cy="431.825" r="1.25" fill="#fff" stroke="#3d5a92" stroke-width="1"/><line x1="66.2" y1="440.375" x2="71.2" y2="440.375" stroke="#a0a0a0" stroke-width="1" stroke-dasharray="1,1.2"/><rect x="57.7" y="436.175" width="8" height="8.4" fill="url(#bg)" stroke="#9c9c9c" stroke-width="1" rx="0.8"/><line x1="58.800000000000004" y1="440.375" x2="64.60000000000001" y2="440.375" stroke="#4565b5" stroke-width="0.9"/><line x1="61.7" y1="436.675" x2="61.7" y2="444.075" stroke="#4565b5" stroke-width="0.9"/><path d="M70.7 436.875 h4.3 q3.1 0 3.1 3.1 v5.9 h-7.4 z" fill="#fbfbf8" stroke="#cfae62" stroke-width="0.85"/><path d="M72.1 434.975 V437.975 Q72.1 439.675 69.8 439.475" fill="none" stroke="#3f6fb0" stroke-width="1.4"/><rect x="71.89999999999999" y="441.175" width="1.6" height="3.3" fill="#3d5a92"/><rect x="74.8" y="441.175" width="1.1" height="3.3" fill="#3d5a92"/><circle cx="78.5" cy="442.875" r="1.25" fill="#fff" stroke="#3d5a92" stroke-width="1"/><line x1="66.2" y1="451.425" x2="71.2" y2="451.425" stroke="#a0a0a0" stroke-width="1" stroke-dasharray="1,1.2"/><rect x="57.7" y="447.225" width="8" height="8.4" fill="url(#bg)" stroke="#9c9c9c" stroke-width="1" rx="0.8"/><line x1="58.800000000000004" y1="451.425" x2="64.60000000000001" y2="451.425" stroke="#4565b5" stroke-width="0.9"/><line x1="61.7" y1="447.725" x2="61.7" y2="455.125" stroke="#4565b5" stroke-width="0.9"/><path d="M70.7 447.925 h4.3 q3.1 0 3.1 3.1 v5.9 h-7.4 z" fill="#fbfbf8" stroke="#cfae62" stroke-width="0.85"/><path d="M72.1 446.02500000000003 V449.02500000000003 Q72.1 450.725 69.8 450.52500000000003" fill="none" stroke="#3f6fb0" stroke-width="1.4"/><rect x="71.89999999999999" y="452.225" width="1.6" height="3.3" fill="#3d5a92"/><rect x="74.8" y="452.225" width="1.1" height="3.3" fill="#3d5a92"/><circle cx="78.5" cy="453.925" r="1.25" fill="#fff" stroke="#3d5a92" stroke-width="1"/><line x1="66.2" y1="462.475" x2="71.2" y2="462.475" stroke="#a0a0a0" stroke-width="1" stroke-dasharray="1,1.2"/><rect x="57.7" y="458.27500000000003" width="8" height="8.4" fill="url(#bg)" stroke="#9c9c9c" stroke-width="1" rx="0.8"/><line x1="58.800000000000004" y1="462.475" x2="64.60000000000001" y2="462.475" stroke="#4565b5" stroke-width="0.9"/><line x1="61.7" y1="458.77500000000003" x2="61.7" y2="466.175" stroke="#4565b5" stroke-width="0.9"/><path d="M70.7 458.975 h4.3 q3.1 0 3.1 3.1 v5.9 h-7.4 z" fill="#fbfbf8" stroke="#cfae62" stroke-width="0.85"/><path d="M72.1 457.07500000000005 V460.07500000000005 Q72.1 461.77500000000003 69.8 461.57500000000005" fill="none" stroke="#3f6fb0" stroke-width="1.4"/><rect x="71.89999999999999" y="463.27500000000003" width="1.6" height="3.3" fill="#3d5a92"/><rect x="74.8" y="463.27500000000003" width="1.1" height="3.3" fill="#3d5a92"/><circle cx="78.5" cy="464.975" r="1.25" fill="#fff" stroke="#3d5a92" stroke-width="1"/><line x1="66.2" y1="473.525" x2="71.2" y2="473.525" stroke="#a0a0a0" stroke-width="1" stroke-dasharray="1,1.2"/><rect x="57.7" y="469.325" width="8" height="8.4" fill="url(#bg)" stroke="#9c9c9c" stroke-width="1" rx="0.8"/><line x1="58.800000000000004" y1="473.525" x2="64.60000000000001" y2="473.525" stroke="#4565b5" stroke-width="0.9"/><line x1="61.7" y1="469.825" x2="61.7" y2="477.22499999999997" stroke="#4565b5" stroke-width="0.9"/><path d="M70.7 470.025 h4.3 q3.1 0 3.1 3.1 v5.9 h-7.4 z" fill="#fbfbf8" stroke="#cfae62" stroke-width="0.85"/><path d="M72.1 468.125 V471.125 Q72.1 472.825 69.8 472.625" fill="none" stroke="#3f6fb0" stroke-width="1.4"/><rect x="71.89999999999999" y="474.325" width="1.6" height="3.3" fill="#3d5a92"/><rect x="74.8" y="474.325" width="1.1" height="3.3" fill="#3d5a92"/><circle cx="78.5" cy="476.025" r="1.25" fill="#fff" stroke="#3d5a92" stroke-width="1"/><line x1="66.2" y1="484.575" x2="71.2" y2="484.575" stroke="#a0a0a0" stroke-width="1" stroke-dasharray="1,1.2"/><rect x="57.7" y="480.375" width="8" height="8.4" fill="url(#bg)" stroke="#9c9c9c" stroke-width="1" rx="0.8"/><line x1="58.800000000000004" y1="484.575" x2="64.60000000000001" y2="484.575" stroke="#4565b5" stroke-width="0.9"/><line x1="61.7" y1="480.875" x2="61.7" y2="488.275" stroke="#4565b5" stroke-width="0.9"/><path d="M70.7 481.075 h4.3 q3.1 0 3.1 3.1 v5.9 h-7.4 z" fill="#fbfbf8" stroke="#cfae62" stroke-width="0.85"/><path d="M72.1 479.175 V482.175 Q72.1 483.875 69.8 483.675" fill="none" stroke="#3f6fb0" stroke-width="1.4"/><rect x="71.89999999999999" y="485.375" width="1.6" height="3.3" fill="#3d5a92"/><rect x="74.8" y="485.375" width="1.1" height="3.3" fill="#3d5a92"/><circle cx="78.5" cy="487.075" r="1.25" fill="#fff" stroke="#3d5a92" stroke-width="1"/><line x1="66.2" y1="495.625" x2="71.2" y2="495.625" stroke="#a0a0a0" stroke-width="1" stroke-dasharray="1,1.2"/><rect x="57.7" y="491.425" width="8" height="8.4" fill="url(#bg)" stroke="#9c9c9c" stroke-width="1" rx="0.8"/><line x1="58.800000000000004" y1="495.625" x2="64.60000000000001" y2="495.625" stroke="#4565b5" stroke-width="0.9"/><line x1="61.7" y1="491.925" x2="61.7" y2="499.325" stroke="#4565b5" stroke-width="0.9"/><path d="M70.7 492.125 h4.3 q3.1 0 3.1 3.1 v5.9 h-7.4 z" fill="#fbfbf8" stroke="#cfae62" stroke-width="0.85"/><path d="M72.1 490.225 V493.225 Q72.1 494.925 69.8 494.725" fill="none" stroke="#3f6fb0" stroke-width="1.4"/><rect x="71.89999999999999" y="496.425" width="1.6" height="3.3" fill="#3d5a92"/><rect x="74.8" y="496.425" width="1.1" height="3.3" fill="#3d5a92"/><circle cx="78.5" cy="498.125" r="1.25" fill="#fff" stroke="#3d5a92" stroke-width="1"/><line x1="66.2" y1="506.675" x2="71.2" y2="506.675" stroke="#a0a0a0" stroke-width="1" stroke-dasharray="1,1.2"/><rect x="57.7" y="502.475" width="8" height="8.4" fill="url(#bg)" stroke="#9c9c9c" stroke-width="1" rx="0.8"/><line x1="58.800000000000004" y1="506.675" x2="64.60000000000001" y2="506.675" stroke="#4565b5" stroke-width="0.9"/><line x1="61.7" y1="502.975" x2="61.7" y2="510.375" stroke="#4565b5" stroke-width="0.9"/><path d="M70.7 503.175 h4.3 q3.1 0 3.1 3.1 v5.9 h-7.4 z" fill="#fbfbf8" stroke="#cfae62" stroke-width="0.85"/><path d="M72.1 501.27500000000003 V504.27500000000003 Q72.1 505.975 69.8 505.77500000000003" fill="none" stroke="#3f6fb0" stroke-width="1.4"/><rect x="71.89999999999999" y="507.475" width="1.6" height="3.3" fill="#3d5a92"/><rect x="74.8" y="507.475" width="1.1" height="3.3" fill="#3d5a92"/><circle cx="78.5" cy="509.175" r="1.25" fill="#fff" stroke="#3d5a92" stroke-width="1"/><line x1="66.2" y1="517.725" x2="71.2" y2="517.725" stroke="#a0a0a0" stroke-width="1" stroke-dasharray="1,1.2"/><rect x="57.7" y="513.525" width="8" height="8.4" fill="url(#bg)" stroke="#9c9c9c" stroke-width="1" rx="0.8"/><line x1="58.800000000000004" y1="517.725" x2="64.60000000000001" y2="517.725" stroke="#4565b5" stroke-width="0.9"/><line x1="61.7" y1="514.025" x2="61.7" y2="521.4250000000001" stroke="#4565b5" stroke-width="0.9"/><path d="M70.7 514.225 h4.3 q3.1 0 3.1 3.1 v5.9 h-7.4 z" fill="#fbfbf8" stroke="#cfae62" stroke-width="0.85"/><path d="M72.1 512.325 V515.325 Q72.1 517.025 69.8 516.825" fill="none" stroke="#3f6fb0" stroke-width="1.4"/><rect x="71.89999999999999" y="518.525" width="1.6" height="3.3" fill="#3d5a92"/><rect x="74.8" y="518.525" width="1.1" height="3.3" fill="#3d5a92"/><circle cx="78.5" cy="520.225" r="1.25" fill="#fff" stroke="#3d5a92" stroke-width="1"/><line x1="66.2" y1="528.775" x2="71.2" y2="528.775" stroke="#a0a0a0" stroke-width="1" stroke-dasharray="1,1.2"/><rect x="57.7" y="524.5749999999999" width="8" height="8.4" fill="url(#bg)" stroke="#9c9c9c" stroke-width="1" rx="0.8"/><line x1="58.800000000000004" y1="528.775" x2="64.60000000000001" y2="528.775" stroke="#4565b5" stroke-width="0.9"/><line x1="61.7" y1="525.0749999999999" x2="61.7" y2="532.475" stroke="#4565b5" stroke-width="0.9"/><path d="M70.7 525.275 h4.3 q3.1 0 3.1 3.1 v5.9 h-7.4 z" fill="#fbfbf8" stroke="#cfae62" stroke-width="0.85"/><path d="M72.1 523.375 V526.375 Q72.1 528.0749999999999 69.8 527.875" fill="none" stroke="#3f6fb0" stroke-width="1.4"/><rect x="71.89999999999999" y="529.5749999999999" width="1.6" height="3.3" fill="#3d5a92"/><rect x="74.8" y="529.5749999999999" width="1.1" height="3.3" fill="#3d5a92"/><circle cx="78.5" cy="531.275" r="1.25" fill="#fff" stroke="#3d5a92" stroke-width="1"/><line x1="66.2" y1="539.8249999999999" x2="71.2" y2="539.8249999999999" stroke="#a0a0a0" stroke-width="1" stroke-dasharray="1,1.2"/><rect x="57.7" y="535.6249999999999" width="8" height="8.4" fill="url(#bg)" stroke="#9c9c9c" stroke-width="1" rx="0.8"/><line x1="58.800000000000004" y1="539.8249999999999" x2="64.60000000000001" y2="539.8249999999999" stroke="#4565b5" stroke-width="0.9"/><line x1="61.7" y1="536.1249999999999" x2="61.7" y2="543.525" stroke="#4565b5" stroke-width="0.9"/><path d="M70.7 536.3249999999999 h4.3 q3.1 0 3.1 3.1 v5.9 h-7.4 z" fill="#fbfbf8" stroke="#cfae62" stroke-width="0.85"/><path d="M72.1 534.425 V537.425 Q72.1 539.1249999999999 69.8 538.925" fill="none" stroke="#3f6fb0" stroke-width="1.4"/><rect x="71.89999999999999" y="540.6249999999999" width="1.6" height="3.3" fill="#3d5a92"/><rect x="74.8" y="540.6249999999999" width="1.1" height="3.3" fill="#3d5a92"/><circle cx="78.5" cy="542.3249999999999" r="1.25" fill="#fff" stroke="#3d5a92" stroke-width="1"/><line x1="66.2" y1="550.875" x2="71.2" y2="550.875" stroke="#a0a0a0" stroke-width="1" stroke-dasharray="1,1.2"/><rect x="57.7" y="546.675" width="8" height="8.4" fill="url(#bg)" stroke="#9c9c9c" stroke-width="1" rx="0.8"/><line x1="58.800000000000004" y1="550.875" x2="64.60000000000001" y2="550.875" stroke="#4565b5" stroke-width="0.9"/><line x1="61.7" y1="547.175" x2="61.7" y2="554.575" stroke="#4565b5" stroke-width="0.9"/><path d="M70.7 547.375 h4.3 q3.1 0 3.1 3.1 v5.9 h-7.4 z" fill="#fbfbf8" stroke="#cfae62" stroke-width="0.85"/><path d="M72.1 545.475 V548.475 Q72.1 550.175 69.8 549.975" fill="none" stroke="#3f6fb0" stroke-width="1.4"/><rect x="71.89999999999999" y="551.675" width="1.6" height="3.3" fill="#3d5a92"/><rect x="74.8" y="551.675" width="1.1" height="3.3" fill="#3d5a92"/><circle cx="78.5" cy="553.375" r="1.25" fill="#fff" stroke="#3d5a92" stroke-width="1"/><line x1="66.2" y1="561.9250000000001" x2="71.2" y2="561.9250000000001" stroke="#a0a0a0" stroke-width="1" stroke-dasharray="1,1.2"/><rect x="57.7" y="557.725" width="8" height="8.4" fill="url(#bg)" stroke="#9c9c9c" stroke-width="1" rx="0.8"/><line x1="58.800000000000004" y1="561.9250000000001" x2="64.60000000000001" y2="561.9250000000001" stroke="#4565b5" stroke-width="0.9"/><line x1="61.7" y1="558.225" x2="61.7" y2="565.6250000000001" stroke="#4565b5" stroke-width="0.9"/><path d="M70.7 558.4250000000001 h4.3 q3.1 0 3.1 3.1 v5.9 h-7.4 z" fill="#fbfbf8" stroke="#cfae62" stroke-width="0.85"/><path d="M72.1 556.5250000000001 V559.5250000000001 Q72.1 561.225 69.8 561.0250000000001" fill="none" stroke="#3f6fb0" stroke-width="1.4"/><rect x="71.89999999999999" y="562.725" width="1.6" height="3.3" fill="#3d5a92"/><rect x="74.8" y="562.725" width="1.1" height="3.3" fill="#3d5a92"/><circle cx="78.5" cy="564.4250000000001" r="1.25" fill="#fff" stroke="#3d5a92" stroke-width="1"/><line x1="66.2" y1="572.975" x2="71.2" y2="572.975" stroke="#a0a0a0" stroke-width="1" stroke-dasharray="1,1.2"/><rect x="57.7" y="568.775" width="8" height="8.4" fill="url(#bg)" stroke="#9c9c9c" stroke-width="1" rx="0.8"/><line x1="58.800000000000004" y1="572.975" x2="64.60000000000001" y2="572.975" stroke="#4565b5" stroke-width="0.9"/><line x1="61.7" y1="569.275" x2="61.7" y2="576.6750000000001" stroke="#4565b5" stroke-width="0.9"/><path d="M70.7 569.475 h4.3 q3.1 0 3.1 3.1 v5.9 h-7.4 z" fill="#fbfbf8" stroke="#cfae62" stroke-width="0.85"/><path d="M72.1 567.575 V570.575 Q72.1 572.275 69.8 572.075" fill="none" stroke="#3f6fb0" stroke-width="1.4"/><rect x="71.89999999999999" y="573.775" width="1.6" height="3.3" fill="#3d5a92"/><rect x="74.8" y="573.775" width="1.1" height="3.3" fill="#3d5a92"/><circle cx="78.5" cy="575.475" r="1.25" fill="#fff" stroke="#3d5a92" stroke-width="1"/><line x1="66.2" y1="584.025" x2="71.2" y2="584.025" stroke="#a0a0a0" stroke-width="1" stroke-dasharray="1,1.2"/><rect x="57.7" y="579.8249999999999" width="8" height="8.4" fill="url(#bg)" stroke="#9c9c9c" stroke-width="1" rx="0.8"/><line x1="58.800000000000004" y1="584.025" x2="64.60000000000001" y2="584.025" stroke="#4565b5" stroke-width="0.9"/><line x1="61.7" y1="580.3249999999999" x2="61.7" y2="587.725" stroke="#4565b5" stroke-width="0.9"/><path d="M70.7 580.525 h4.3 q3.1 0 3.1 3.1 v5.9 h-7.4 z" fill="#fbfbf8" stroke="#cfae62" stroke-width="0.85"/><path d="M72.1 578.625 V581.625 Q72.1 583.3249999999999 69.8 583.125" fill="none" stroke="#3f6fb0" stroke-width="1.4"/><rect x="71.89999999999999" y="584.8249999999999" width="1.6" height="3.3" fill="#3d5a92"/><rect x="74.8" y="584.8249999999999" width="1.1" height="3.3" fill="#3d5a92"/><circle cx="78.5" cy="586.525" r="1.25" fill="#fff" stroke="#3d5a92" stroke-width="1"/></svg>
<div class="tt" style="left:30.70px;top:26.66px"><span class="ts">META-INF</span></div>
<div class="tt" style="left:30.70px;top:37.71px"><span class="ts">com.ufsoft</span></div>
<div class="tt" style="left:30.70px;top:48.76px"><span class="ts">nc</span></div>
<div class="tt" style="left:43.95px;top:59.81px"><span class="ts">bs</span></div>
<div class="tt" style="left:43.95px;top:70.86px"><span class="ts">impl.iufo</span></div>
<div class="tt" style="left:43.95px;top:81.91px"><span class="ts">itf</span></div>
<div class="tt" style="left:43.95px;top:92.96px"><span class="ts">ui</span></div>
<div class="tt" style="left:57.20px;top:104.01px"><span class="ts">hbbb</span></div>
<div class="tt" style="left:70.45px;top:115.06px"><span class="ts">adjustedreport</span></div>
<div class="tt" style="left:70.45px;top:126.11px"><span class="ts">batchacctransfer</span></div>
<div class="tt" style="left:70.45px;top:137.16px"><span class="ts">commonvouch</span></div>
<div class="tt" style="left:70.45px;top:148.21px"><span class="ts">dxrelation</span></div>
<div class="tt" style="left:70.45px;top:159.26px"><span class="ts">dxrelation temp</span></div>
<div class="tt" style="left:70.45px;top:170.31px"><span class="ts">dxscheme</span></div>
<div class="tt" style="left:70.45px;top:181.36px"><span class="ts">hb</span></div>
<div class="tt" style="left:70.45px;top:192.41px"><span class="ts">hbunit</span></div>
<div class="tt" style="left:70.45px;top:203.46px"><span class="ts">innertrade</span></div>
<div class="tt" style="left:83.70px;top:214.51px"><span class="ts">AbsVouchInputAction.class</span></div>
<div class="tt" style="left:83.70px;top:225.56px"><span class="ts">AbsVouchInputEnterAction.class</span></div>
<div class="tt" style="left:83.70px;top:236.61px"><span class="ts">AbsVouchInputEnterUI.class</span></div>
<div class="tt" style="left:83.70px;top:247.66px"><span class="ts">AbsVouchInputUI.class</span></div>
<div class="tt" style="left:83.70px;top:258.71px"><span class="ts">AbsVouchSelCounterUnitAction.class</span></div>
<div class="tt" style="left:83.70px;top:269.76px"><span class="ts">AbsVouchSelCounterUnitUI.class</span></div>
<div class="tt" style="left:83.70px;top:280.81px"><span class="ts">AbsVouchSelItemAction.class</span></div>
<div class="tt" style="left:83.70px;top:291.86px"><span class="ts">AbsVouchSelItemUI.class</span></div>
<div class="tt" style="left:83.70px;top:302.91px"><span class="ts">AbsVouchSelUnitTimeAction.class</span></div>
<div class="tt" style="left:83.70px;top:313.96px"><span class="ts">AbsVouchSelUnitTimeUI.class</span></div>
<div class="tt" style="left:83.70px;top:325.01px"><span class="ts">VouchDataBO Client.class</span></div>
<div class="tt" style="left:83.70px;top:336.06px"><span class="ts">VouchDataEnterUI.class</span></div>
<div class="tt" style="left:83.70px;top:347.11px"><span class="ts">VouchDataInputAction.class</span></div>
<div class="tt" style="left:83.70px;top:358.16px"><span class="ts">VouchDataInputEnterAction.class</span></div>
<div class="tt" style="left:83.70px;top:369.21px"><span class="ts">VouchDataInputEnterUI.class</span></div>
<div class="tt" style="left:83.70px;top:380.26px"><span class="ts">VouchDataInputUI.class</span></div>
<div class="tt" style="left:83.70px;top:391.31px"><span class="ts">VouchDataQueryEnterAction.class</span></div>
<div class="tt" style="left:83.70px;top:402.36px"><span class="ts">VouchDataSelCounterUnitAction.class</span></div>
<div class="tt" style="left:83.70px;top:413.41px"><span class="ts">VouchDataSelCounterUnitUI.class</span></div>
<div class="tt" style="left:83.70px;top:424.46px"><span class="ts">VouchDataSelItemAction.class</span></div>
<div class="tt" style="left:83.70px;top:435.51px"><span class="ts">VouchDataSelItemUI.class</span></div>
<div class="tt" style="left:83.70px;top:446.56px"><span class="ts">VouchDataSelUnitTimeAction.class</span></div>
<div class="tt" style="left:83.70px;top:457.61px"><span class="ts">VouchDataSelUnitTimeUI.class</span></div>
<div class="tt" style="left:83.70px;top:468.66px"><span class="ts">VouchDataTurnAction.class</span></div>
<div class="tt" style="left:83.70px;top:479.71px"><span class="ts">VouchDataTurnEnterUI.class</span></div>
<div class="tt" style="left:83.70px;top:490.76px"><span class="ts">VouchDataTurnUI.class</span></div>
<div class="tt" style="left:83.70px;top:501.81px"><span class="ts">VouchFormulaBO Client.class</span></div>
<div class="a" style="left:80.8px;top:512.30px;width:180px;height:10.9px;background:#0f6bd6"></div>
<div class="tt" style="left:83.70px;top:512.86px;color:#fff"><span class="ts">VouchFormulaCopyAction.class</span></div>
<div class="tt" style="left:83.70px;top:523.91px"><span class="ts">VouchFormulaCopyEnterUI.class</span></div>
<div class="tt" style="left:83.70px;top:534.96px"><span class="ts">VouchFormulaCopyUI.class</span></div>
<div class="tt" style="left:83.70px;top:546.01px"><span class="ts">VouchFormulaEnterUI.class</span></div>
<div class="tt" style="left:83.70px;top:557.06px"><span class="ts">VouchFormulaExportAction.class</span></div>
<div class="tt" style="left:83.70px;top:568.11px"><span class="ts">VouchFormulaExportEnterUI.class</span></div>
<div class="tt" style="left:83.70px;top:579.16px"><span class="ts">VouchFormulaImportAction.class</span></div>
</div></div>
<div class="a" style="left:409px;top:182.47px;width:671px;height:13.9px;background:#e8f2fe"></div>
<div class="a" style="left:491.4px;top:182.1px;width:136.8px;height:13.7px;background:#f5a21b"></div>
<div class="cl" style="top:51.35px"><span class="k">import</span> com.ufida.web.action.ErrorForward;</div>
<div class="cl" style="top:65.88px"><span class="k">import</span> com.ufida.web.comp.WebTree2ListModel;</div>
<div class="cl" style="top:80.41px"><span class="k">import</span> <span class="u">com.ufsoft.iufo.querycond.ui.WithUnitTreeDialogAction</span>;</div>
<div class="cl" style="top:94.94px"><span class="k">import</span> com.ufsoft.iufo.resource.StringResource;</div>
<div class="cl" style="top:109.47px"><span class="k">import</span> com.ufsoft.iufo.web.IUFOAction;</div>
<div class="cl" style="top:124.00px"><span class="k">import</span> java.util.ArrayList;</div>
<div class="cl" style="top:138.53px"><span class="k">import</span> nc.vo.hbbb.innertrade.VouchFormulaCondVO;</div>
<div class="cl" style="top:153.06px"><span class="k">import</span> nc.vo.hbbb.innertrade.VouchFormulaVO;</div>
<div class="cl" style="top:167.59px"></div>
<div class="cl" style="top:182.12px"><span class="k">public</span> <span class="k">class</span> VouchFormulaCopyAction <span class="k">extends</span> <span class="u">WithUnitTreeDialogAction</span> {</div>
<svg class="a" style="left:400px;top:184.87px" width="9" height="8"><circle cx="4.8" cy="4" r="3" fill="#d3e3f1" stroke="#9aaec4" stroke-width="0.8"/><line x1="3.2" y1="4" x2="6.4" y2="4" stroke="#3c4656" stroke-width="1.1"/></svg>
<div class="cl" style="top:196.65px">  <span class="k">public</span> ActionForward execute(ActionForm actionForm) {</div>
<svg class="a" style="left:400px;top:199.40px" width="9" height="8"><circle cx="4.8" cy="4" r="3" fill="#d3e3f1" stroke="#9aaec4" stroke-width="0.8"/><line x1="3.2" y1="4" x2="6.4" y2="4" stroke="#3c4656" stroke-width="1.1"/></svg>
<div class="cl" style="top:211.18px">    <span class="u">VouchQueryForm</span> form = (<span class="u">VouchQueryForm</span>)actionForm;</div>
<div class="ln" style="top:210.83px">37</div>
<div class="cl" style="top:225.71px">    String[] strCopyUnitCodes = getListValues(<span class="s">&quot;selCopyUnitList&quot;</span>);</div>
<div class="ln" style="top:225.36px">39</div>
<div class="cl" style="top:240.24px">    String[] strMeasPKs = getListValues(<span class="s">&quot;selItemList&quot;</span>);</div>
<div class="ln" style="top:239.89px">40</div>
<div class="cl" style="top:254.77px">    String[] strCounterUnitPKs = getListValues(<span class="s">&quot;selUnitList&quot;</span>);</div>
<div class="ln" style="top:254.42px">41</div>
<div class="cl" style="top:269.30px">    VouchFormulaCondVO cond = <span class="k">new</span> VouchFormulaCondVO();</div>
<div class="ln" style="top:268.95px">43</div>
<div class="cl" style="top:283.83px">    cond.setSelfUnitCode(form.<span class="u">getSelfUnitPK</span>());</div>
<div class="ln" style="top:283.48px">44</div>
<div class="cl" style="top:298.36px">    cond.setItemCodes(strMeasPKs);</div>
<div class="ln" style="top:298.01px">45</div>
<div class="cl" style="top:312.89px">    cond.setCounterUnitCodes(strCounterUnitPKs);</div>
<div class="ln" style="top:312.54px">46</div>
<div class="cl" style="top:327.42px">    <span class="k">try</span> {</div>
<svg class="a" style="left:400px;top:330.17px" width="9" height="8"><circle cx="4.8" cy="4" r="3" fill="#d3e3f1" stroke="#9aaec4" stroke-width="0.8"/><line x1="3.2" y1="4" x2="6.4" y2="4" stroke="#3c4656" stroke-width="1.1"/></svg>
<div class="cl" style="top:341.95px">      VouchFormulaVO[][] formulas = <span class="u">VouchFormulaBO_Client</span>.<span class="u">getVouchFormulasByCond</span>(cond);</div>
<div class="ln" style="top:341.60px">49</div>
<div class="cl" style="top:356.48px">      ArrayList&lt;VouchFormulaVO&gt; vForm = <span class="k">new</span> ArrayList();</div>
<div class="ln" style="top:356.13px">51</div>
<div class="cl" style="top:371.01px">      <span class="k">int</span> i;</div>
<div class="cl" style="top:385.54px">      <span class="k">for</span> (i = 0; i &lt; formulas.length; i++) {</div>
<div class="ln" style="top:385.19px">52</div>
<svg class="a" style="left:400px;top:388.29px" width="9" height="8"><circle cx="4.8" cy="4" r="3" fill="#d3e3f1" stroke="#9aaec4" stroke-width="0.8"/><line x1="3.2" y1="4" x2="6.4" y2="4" stroke="#3c4656" stroke-width="1.1"/></svg>
<div class="cl" style="top:400.07px">        <span class="k">for</span> (<span class="k">int</span> j = 0; j &lt; (formulas[i]).length; j++)</div>
<div class="ln" style="top:399.72px">53</div>
<div class="cl" style="top:414.60px">          vForm.add(formulas[i][j]);</div>
<div class="ln" style="top:414.25px">54</div>
<div class="cl" style="top:429.13px">      }</div>
<div class="cl" style="top:443.66px">      <span class="k">for</span> (i = 0; i &lt; strCopyUnitCodes.length; i++) {</div>
<div class="ln" style="top:443.31px">58</div>
<svg class="a" style="left:400px;top:446.41px" width="9" height="8"><circle cx="4.8" cy="4" r="3" fill="#d3e3f1" stroke="#9aaec4" stroke-width="0.8"/><line x1="3.2" y1="4" x2="6.4" y2="4" stroke="#3c4656" stroke-width="1.1"/></svg>
<div class="cl" style="top:458.19px">        <span class="k">if</span> (!strCopyUnitCodes[i].equals(form.<span class="u">getSelfUnitPK</span>())) {</div>
<div class="ln" style="top:457.84px">59</div>
<svg class="a" style="left:400px;top:460.94px" width="9" height="8"><circle cx="4.8" cy="4" r="3" fill="#d3e3f1" stroke="#9aaec4" stroke-width="0.8"/><line x1="3.2" y1="4" x2="6.4" y2="4" stroke="#3c4656" stroke-width="1.1"/></svg>
<div class="cl" style="top:472.72px">          <span class="k">for</span> (<span class="k">int</span> j = 0; j &lt; vForm.size(); j++) {</div>
<div class="ln" style="top:472.37px">62</div>
<svg class="a" style="left:400px;top:475.47px" width="9" height="8"><circle cx="4.8" cy="4" r="3" fill="#d3e3f1" stroke="#9aaec4" stroke-width="0.8"/><line x1="3.2" y1="4" x2="6.4" y2="4" stroke="#3c4656" stroke-width="1.1"/></svg>
<div class="cl" style="top:487.25px">            VouchFormulaVO formula = vForm.get(j);</div>
<div class="ln" style="top:486.90px">63</div>
<div class="cl" style="top:501.78px">            formula.setSelfUnitCode(strCopyUnitCodes[i]);</div>
<div class="ln" style="top:501.43px">64</div>
<div class="cl" style="top:516.31px">          }</div>
<div class="cl" style="top:530.84px">          <span class="u">VouchFormulaBO_Client</span>.<span class="u">addVouchFormulas</span>(vForm.&lt;VouchFormulaVO&gt;toArray(<span class="k">new</span> VouchFormulaVO[0]));</div>
<div class="ln" style="top:530.49px">67</div>
<div class="cl" style="top:545.37px">        }</div>
<div class="cl" style="top:559.90px">      }</div>
<div class="cl" style="top:574.43px">    } <span class="k">catch</span> (Exception e) {</div>
<div class="ln" style="top:574.08px">70</div>
<svg class="a" style="left:0;top:0" width="1080" height="589"><g fill="#000" fill-opacity="0.075"><path d="M402.6 277.9 L424 271 L414.1 297.5 L430.5 292.5 L411.8 319.5 Q404 310 402.6 296 Z"/><path d="M435.5 281.7 L448.8 275 L449 296 Q446 312 425.5 322.5 L440.5 300.5 L432.5 302.5 Z"/></g><g fill="none" stroke="#000" stroke-opacity="0.075" stroke-width="3.2" stroke-linecap="butt"><path d="M469.0 285 H493.0 M481.0 282 V287 L472.0 292 M481.0 287 L492.0 292 M469.0 293.5 H495.0 M489.0 293.5 V301.5 H486.0 M474.0 296 H483.0 V300.5 H474.0 Z"/><path d="M511.6 281.5 V284.5 M500.6 289 V285 H522.6 V289 M498.6 293 H524.6 M509.6 288 L504.6 296 L520.6 302 M517.6 293 L512.6 299 L501.6 302"/><path d="M534.2 282 L529.2 291 M532.2 288 V302 M537.2 285 H554.2 M539.2 289 H552.2 M539.2 292.5 H552.2 M539.2 296 H552.2 V301 H539.2 Z"/><path d="M557.8 285 H568.8 M563.3 285 V297 M557.8 297.5 L569.8 296 M573.8 282 L570.8 290 M571.8 287 H583.8 M580.8 287 L572.8 301 M573.8 291 L583.8 301"/><path d="M589.4 302 V283 H595.4 L592.4 289 L596.4 294 L593.4 297 M605.4 282 V285 M598.4 286 H613.4 M603.4 286 L602.4 294 L598.4 302 M602.4 291 H611.4 L610.4 301 H607.4"/><path d="M621.0 282 L622.0 284 M617.0 287 H626.0 L618.0 296 M622.0 290 V302 M623.0 293 L626.0 296 M629.0 290 H642.0 M635.5 283 V301 M628.0 301 H643.0"/><path d="M670.6 284 H648.6 V301 H671.6 M653.6 288 L666.6 298 M665.6 288 L654.6 298"/></g></svg>
<svg class="a" style="left:0;top:0" width="1080" height="589"><g fill="#7a7a7a" fill-opacity="0.47"><ellipse cx="767.3" cy="541.5" rx="14" ry="12.3"/><path d="M757 549 L754.5 557 L763 552 Z"/></g><ellipse cx="782" cy="551.6" rx="12.6" ry="10.8" fill="#fff"/><g fill="#7a7a7a" fill-opacity="0.47"><ellipse cx="782" cy="551.6" rx="11.3" ry="9.6"/><path d="M787 558 L791 563 L791.5 556 Z"/></g><circle cx="777.2" cy="547.6" r="1.7" fill="#fff"/><circle cx="786" cy="547.6" r="1.7" fill="#fff"/><g fill="none" stroke="#7a7a7a" stroke-opacity="0.47" stroke-width="2.4" stroke-linecap="butt" stroke-linejoin="miter"><path d="M812.2 533.1 L804.1 544.3 M818.8 533.1 L827.5 543.8 M815.3 544.9 L807.1 555.5 L824.4 554.5 M821.4 548.4 L826.5 557.6"/><path d="M833.6 542.3 L842.8 532.1 L850.9 542.3 M840.2 544.3 L834.6 557.6 M840.7 550.5 L844.8 556.6 M849.9 544.3 L843.8 557.6 M850.9 548.4 L860.1 557.6"/><path d="M868.2 532.6 h19.4 v7.7 h-19.4 z M865.2 543.8 h24.4 M871.3 543.8 L870.3 548.9 h16.3 L885.5 556.6 h-4"/><path d="M931.4 532.2 L928.4 557.5 M931 535.5 h6 v19.5 l-2 2 M927.5 545.2 h12 M932.5 539.5 l1.5 2 M932.5 548 l1.5 2 M942 533.5 L940 541.5 M944.5 533.5 h4.6 v6 l2.3 1.2 M942.4 546.5 h8.9 v9.8 h-8.9 z"/><path d="M969.9 532.2 V556.9 M959.7 541.8 V557.5 M980.8 541.8 V557.5 M959.7 556.6 H980.8"/><path d="M994 532.2 L987.6 545 M991.6 539.4 V558.1 M1003.2 532 l1.3 2.6 M997 537 H1012.7 M999.4 541.8 H1010.3 M999.4 546 H1010.3 M999.4 549.7 h10.9 v7.5 h-10.9 z"/><path d="M1028.9 531.4 l0.6 2.6 M1016.8 539.5 v-4.2 h24.4 v4.2 M1015 546 H1044 M1026 538.5 L1020.3 550 Q1030 553 1039.5 558.5 M1035.5 546 Q1033 554 1018.5 558.5"/></g><circle cx="908" cy="545.5" r="2.1" fill="#7a7a7a" fill-opacity="0.47"/></svg></body></html>
